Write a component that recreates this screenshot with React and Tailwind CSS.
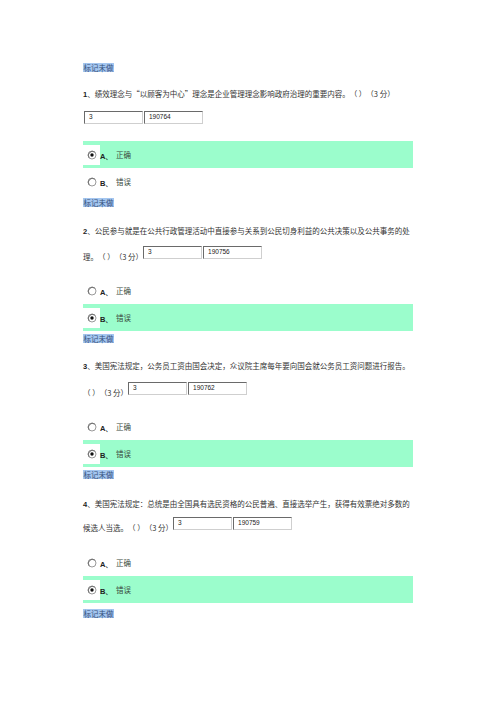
import React from "react";

const cjk = { fontFamily: '"Noto Sans CJK SC", "Liberation Sans", sans-serif' };

// 标记未做 标签
function Tag({ className = "" }) {
  return (
    <div className={`h-[12px] flex items-center ${className}`}>
      <span className="bg-[#a4c6f0] text-[#34507a] text-[7.5px] leading-[9px] px-[0.5px]" style={cjk}>
        标记未做
      </span>
    </div>
  );
}

function Radio({ checked }) {
  return (
    <svg width="10" height="10" viewBox="0 0 10 10">
      <circle cx="5" cy="5" r="4" fill="white" stroke="#9a9a9a" strokeWidth="1" />
      <path d="M2.2 7.8 A4 4 0 0 1 7.8 2.2" fill="none" stroke="#6e6e6e" strokeWidth="1" />
      {checked && <circle cx="5" cy="5" r="1.7" fill="#111" />}
    </svg>
  );
}

// 选项行
function Opcion({ letra, texto, checked, className = "" }) {
  return (
    <div className={`h-[27px] w-[330px] flex items-center ${checked ? "bg-[#9bfdcc]" : ""} ${className}`}>
      <div className={`w-[17px] h-[20px] flex items-center justify-center ${checked ? "bg-white" : ""}`}>
        <Radio checked={checked} />
      </div>
      <span className="text-[7.5px] font-bold text-[#222] translate-y-[2px] w-[16px]" style={{ fontFamily: '"Liberation Sans", sans-serif' }}>
        {letra}
      </span>
      <span className="text-[7.5px] text-[#3a4a40]" style={cjk}>{texto}</span>
    </div>
  );
}

function Cajas({ id, className = "" }) {
  const caja = "w-[59px] h-[13px] bg-white border-t border-l border-t-[#6a6a6a] border-l-[#6a6a6a] border-r border-b border-r-[#cfcfcf] border-b-[#cfcfcf] pl-[4px] text-[6.5px] leading-[9px] text-[#222]";
  return (
    <div className={`flex gap-[1px] ${className}`} style={{ fontFamily: '"Liberation Sans", sans-serif' }}>
      <div className={caja}>3</div>
      <div className={caja}>{id}</div>
    </div>
  );
}

function Linea({ num, children, className = "" }) {
  return (
    <div className={`h-[12px] leading-[12px] text-[7.5px] text-[#333] whitespace-pre [text-spacing-trim:space-all] ${className}`} style={cjk}>
      {num && <span className="font-bold text-[#222]" style={{ fontFamily: '"Liberation Sans", sans-serif' }}>{num}</span>}
      {children}
    </div>
  );
}

export default function App() {
  return (
    <div className="w-[496px] h-[702px] bg-white pl-[83px] pt-[61px]">
      {/* 1 */}
      <Tag />
      <Linea num="1" className="mt-[15px]">、绩效理念与“以顾客为中心”理念是企业管理理念影响政府治理的重要内容。（ ）（3 分）</Linea>
      <Cajas id="190764" className="mt-[11px] ml-[1px]" />
      <Opcion letra="A、" texto="正确" checked className="mt-[17px]" />
      <Opcion letra="B、" texto="错误" />
      <Tag className="mt-[1px]" />

      {/* 2 */}
      <Linea num="2" className="mt-[17px]">、公民参与就是在公共行政管理活动中直接参与关系到公民切身利益的公共决策以及公共事务的处</Linea>
      <div className="mt-[9px] flex items-end">
        <Linea>理。（ ）（3 分）</Linea>
        <Cajas id="190756" className="mb-[4px]" />
      </div>
      <Opcion letra="A、" texto="正确" className="mt-[14px]" />
      <Opcion letra="B、" texto="错误" checked />
      <Tag className="mt-[1px]" />

      {/* 3 */}
      <Linea num="3" className="mt-[16px]">、美国宪法规定，公务员工资由国会决定，众议院主席每年要向国会就公务员工资问题进行报告。</Linea>
      <div className="mt-[10px] flex items-end">
        <Linea>（ ）（3 分）</Linea>
        <Cajas id="190762" className="mb-[4px]" />
      </div>
      <Opcion letra="A、" texto="正确" className="mt-[14px]" />
      <Opcion letra="B、" texto="错误" checked />
      <Tag className="mt-[1px]" />

      {/* 4 */}
      <Linea num="4" className="mt-[18px]">、美国宪法规定：总统是由全国具有选民资格的公民普遍、直接选举产生，获得有效票绝对多数的</Linea>
      <div className="mt-[7px] flex items-end">
        <Linea>候选人当选。（ ）（3 分）</Linea>
        <Cajas id="190759" className="mb-[4px]" />
      </div>
      <Opcion letra="A、" texto="正确" className="mt-[15px]" />
      <Opcion letra="B、" texto="错误" checked />
      <Tag className="mt-[4px]" />
    </div>
  );
}
